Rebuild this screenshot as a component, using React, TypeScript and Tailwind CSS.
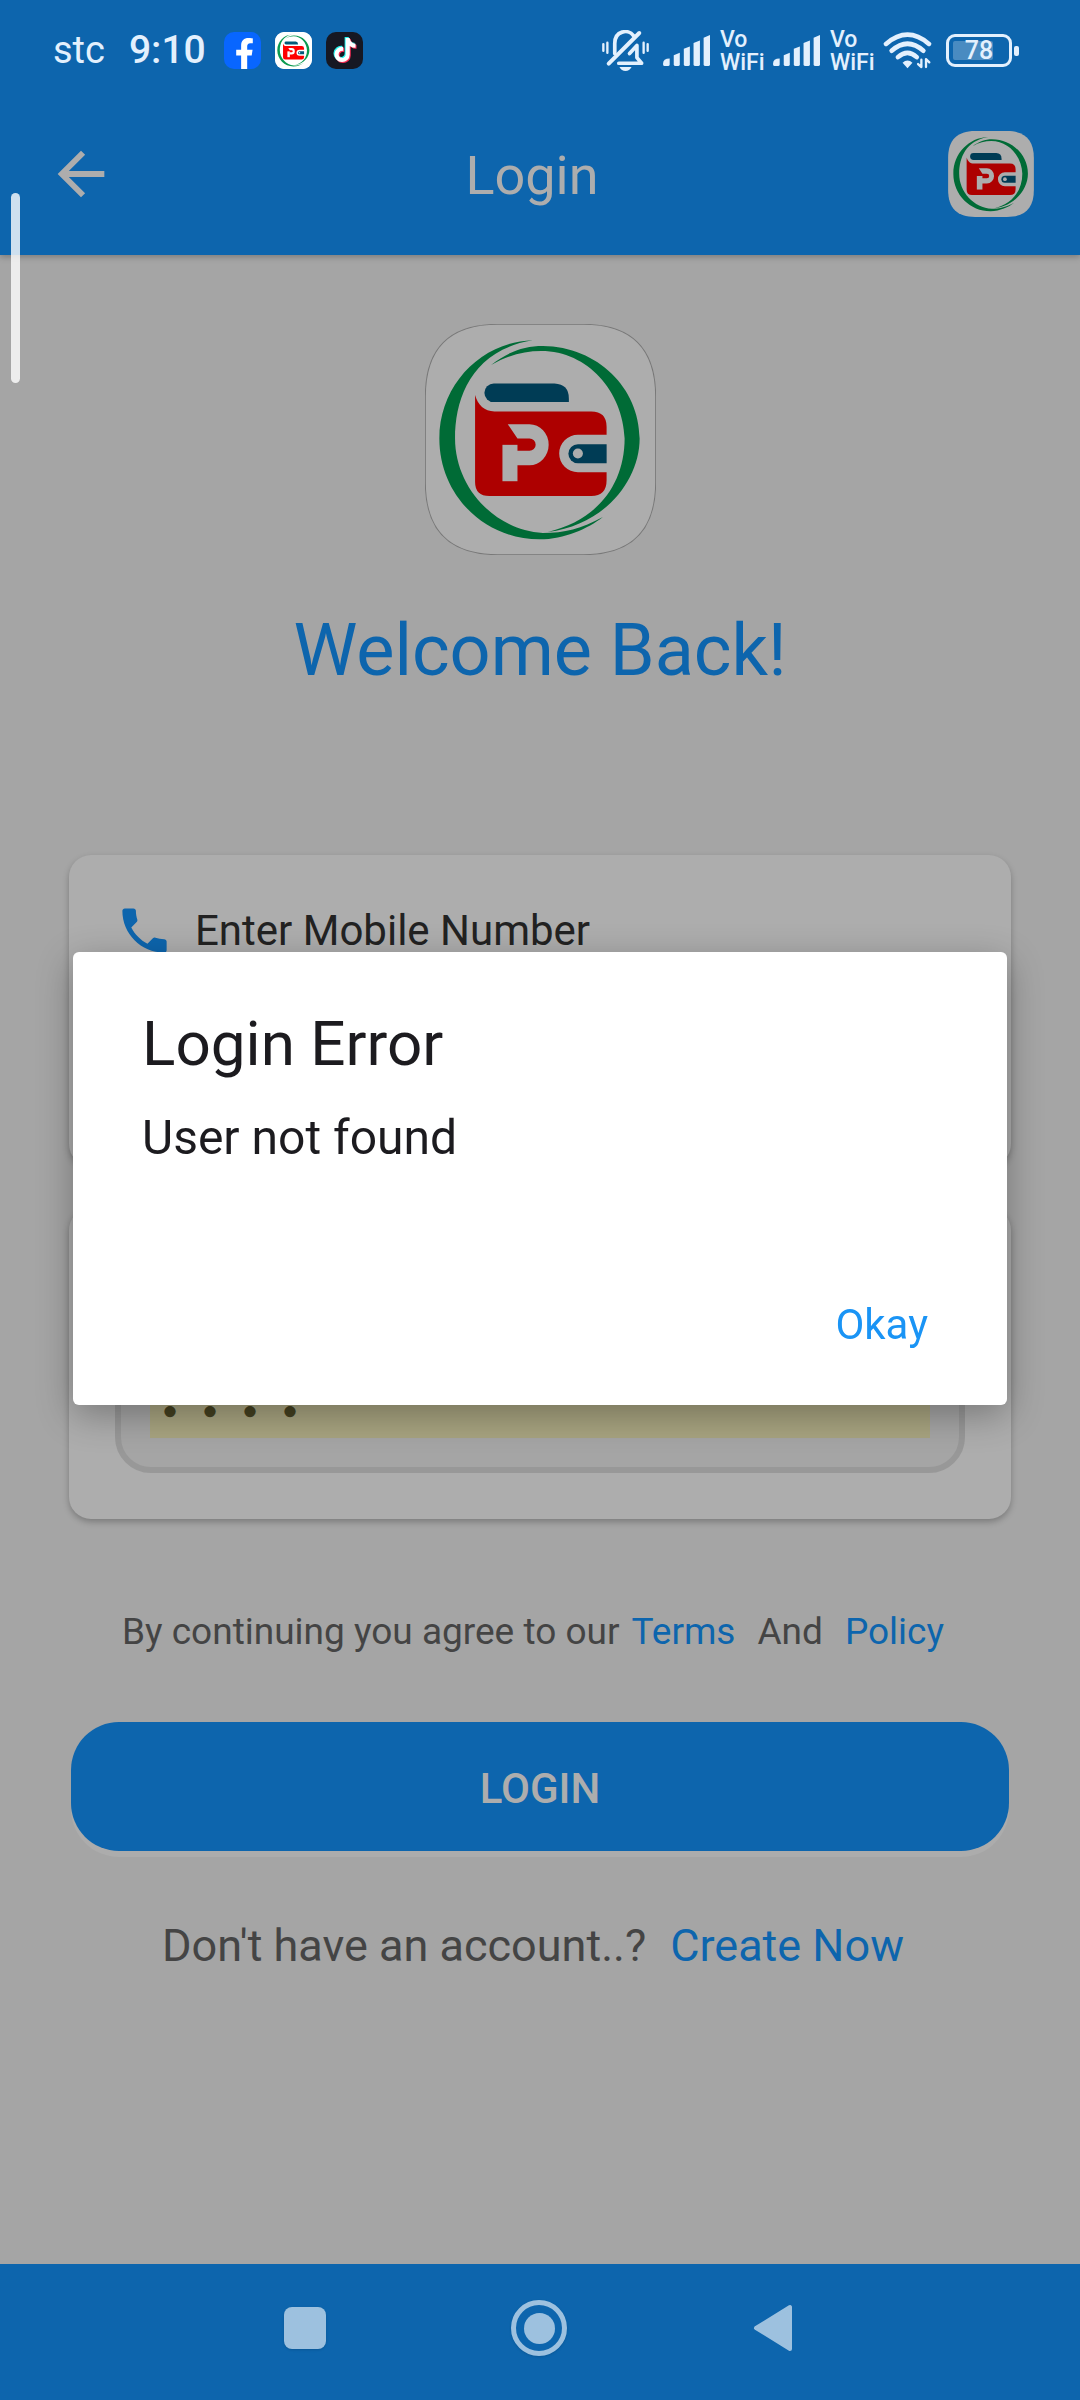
import React, { useState } from "react";
import { FaFacebookF, FaTiktok } from "react-icons/fa";
import { MdArrowBack, MdLock, MdPhone } from "react-icons/md";

interface LogoProps {
  className: string;
  bright?: boolean;
  outlined?: boolean;
}

function Logo({ className, bright = false, outlined = false }: LogoProps) {
  const bg = bright ? "#ffffff" : "#adadad";
  const green = bright ? "#0a9a50" : "#006b36";
  const red = bright ? "#ff0000" : "#ad0000";
  const navy = bright ? "#005a7a" : "#003c55";

  return (
    <svg viewBox="72 72 692 692" className={className} role="img" aria-label="Logo">
      <path
        d="M73 290C73 145 145 73 290 73H546C691 73 763 145 763 290V546C763 691 691 763 546 763H290C145 763 73 691 73 546Z"
        fill={bg}
        stroke={outlined ? "#787878" : "none"}
        strokeWidth="3"
      />
      {/* ring */}
      <path
        d="M395 121C240 125 115 255 115 415C115 585 250 717 415 717C490 717 560 685 605 650C540 685 490 698 425 698C280 690 162 560 162 415C162 290 215 150 395 121Z"
        fill={green}
      />
      <path
        d="M270 195C320 155 370 138 425 138C590 140 715 265 715 415C715 540 610 675 440 695C590 660 670 550 670 415C665 275 560 153 420 153C370 153 320 165 270 195Z"
        fill={green}
      />
      {/* wallet */}
      <path
        d="M222 285C230 315 250 334 280 334H570Q616 334 616 380V404H530A56 56 0 0 0 530 516H616V540Q616 587 570 587H265Q222 587 222 545Z"
        fill={red}
      />
      <path d="M278 250H460Q503 252 503 295V306H278A28 28 0 0 1 278 250Z" fill={navy} />
      <path d="M530 432H616V489H530A28 28 0 0 1 530 432Z" fill={navy} />
      <circle cx="530" cy="460" r="15" fill={bg} />
      <rect x="304" y="434" width="45" height="109" fill={bg} />
      <path
        d="M320 372H385A57 61 0 0 1 385 495H345V452H385A18 18 0 0 0 385 415H349Z"
        fill={bg}
      />
    </svg>
  );
}

function MutedBell() {
  return (
    <svg viewBox="24 22 140 122" className="h-[41px] w-[47px]" fill="none" stroke="currentColor" strokeLinecap="round">
      <path d="M62 92V62C62 24 102 18 117 38" strokeWidth="11" />
      <path d="M44 122L135 31" strokeWidth="12" />
      <path d="M74 121H142L128 104V68L106 92" strokeWidth="11" strokeLinejoin="round" />
      <path d="M28 64V84M160 64V84M40 60V90M148 60V90" strokeWidth="7" />
      <path d="M76 132H112Q106 144 94 144T76 132Z" fill="currentColor" stroke="none" />
    </svg>
  );
}

function SignalBars() {
  return (
    <svg viewBox="208 38 140 92" className="h-[31px] w-[47px]" fill="currentColor">
      <path d="M208 124Q208 108 228 108V126Q228 130 224 130H212Q208 130 208 124Z" />
      <path d="M240 98L258 91V126Q258 130 254 130H244Q240 130 240 126Z" />
      <path d="M270 79L288 72V126Q288 130 284 130H274Q270 130 270 126Z" />
      <path d="M299 62L318 54V126Q318 130 314 130H303Q299 130 299 126Z" />
      <path d="M329 46L348 38V126Q348 130 344 130H333Q329 130 329 126Z" />
    </svg>
  );
}

function WifiIcon() {
  return (
    <svg viewBox="219 28 146 112" className="h-[37px] w-[49px]" fill="none" stroke="currentColor" strokeLinecap="round">
      <path d="M227 64Q292 8 357 64" strokeWidth="14" />
      <path d="M244 85Q292 42 340 85" strokeWidth="14" />
      <path d="M263 104Q292 78 320 104" strokeWidth="14" />
      <path d="M277 121Q292 108 307 121L292 138Z" fill="currentColor" stroke="none" />
      <path d="M334 112V134L324 125M348 134V110L358 120" strokeWidth="7" strokeLinejoin="round" />
    </svg>
  );
}

function VoWifi() {
  return (
    <span className="w-[43px] text-[23px]/[23px] font-medium">
      Vo
      <br />
      WiFi
    </span>
  );
}

function StatusBar() {
  return (
    <div className="flex h-[93px] items-center justify-between pt-2 pr-[61px] pl-[53px] text-[#e3f0fd]">
      <div className="flex items-center">
        <span className="text-[38px]">stc</span>
        <span className="ml-6 text-[39px] font-medium">9:10</span>
        <div className="ml-[18px] flex gap-[14px]">
          <span className="flex size-[37px] items-end justify-center rounded-[10px] bg-[#0866ff] pl-1 text-white">
            <FaFacebookF className="size-[31px]" />
          </span>
          <span className="flex size-[37px] items-center justify-center rounded-[9px] bg-white">
            <Logo bright className="size-[37px]" />
          </span>
          <span className="relative size-[37px] rounded-[10px] bg-[#161823]">
            <FaTiktok className="absolute top-[5px] left-[6px] size-6 text-[#25f4ee]" />
            <FaTiktok className="absolute top-[7px] left-[8px] size-6 text-[#fe2c55]" />
            <FaTiktok className="absolute top-[6px] left-[7px] size-6 text-white" />
          </span>
        </div>
      </div>
      <div className="flex items-center">
        <MutedBell />
        <div className="ml-[14px] flex items-center gap-[10px]">
          <SignalBars />
          <VoWifi />
          <SignalBars />
          <VoWifi />
          <WifiIcon />
        </div>
        <div className="ml-[14px] flex items-center gap-[2px]">
          <span className="relative flex h-[33px] w-[66px] items-center justify-center rounded-[9px] border-3 border-current text-[25px] font-medium">
            <span className="absolute inset-y-1 left-1 w-10 rounded-[2px] bg-white/25" />
            <span className="relative">78</span>
          </span>
          <span className="h-[10px] w-[5px] rounded-[2px] bg-current" />
        </div>
      </div>
    </div>
  );
}

interface FieldProps {
  id: string;
  label: string;
  type: string;
  icon: React.ReactNode;
  value: string;
  onChange: (value: string) => void;
}

function Field({ id, label, type, icon, value, onChange }: FieldProps) {
  return (
    <div className="rounded-[22px] bg-[#adadad] p-[46px] shadow-[0_3px_6px_rgba(0,0,0,0.25)]">
      <label htmlFor={id} className="flex items-center gap-[21px] text-[42px]/[59px] text-[#222]">
        <span className="text-[59px] text-[#0d65ad]">{icon}</span>
        {label}
      </label>
      <div className="mt-[34px] rounded-[36px] border-6 border-[#989898] bg-[#a5a5a5] p-[29px]">
        <input
          id={id}
          type={type}
          value={value}
          onChange={(e) => onChange(e.target.value)}
          className="block h-14 w-full bg-[#a8a480] font-['Noto_Sans_CJK_SC',sans-serif] text-[40px]/[56px] font-black text-[#444020] outline-none"
        />
      </div>
    </div>
  );
}

function NavBar() {
  return (
    <nav className="flex h-[136px] items-center justify-center gap-[178px] bg-[#0d65ad] pr-[2px] pb-2 text-[#9dc1df]">
      <button type="button" aria-label="Recent apps" className="flex size-14 items-center justify-center">
        <span className="size-[42px] rounded-lg bg-current shadow-sm" />
      </button>
      <button
        type="button"
        aria-label="Home"
        className="flex size-14 items-center justify-center rounded-full border-[5px] border-current shadow-sm"
      >
        <span className="size-[31px] rounded-full bg-current" />
      </button>
      <button type="button" aria-label="Back" className="flex size-14 items-center justify-center">
        <svg viewBox="0 0 40 48" className="h-12 w-10" fill="currentColor" stroke="currentColor" strokeWidth="4" strokeLinejoin="round">
          <path d="M3 24L37 3V45Z" />
        </svg>
      </button>
    </nav>
  );
}

export default function App() {
  const [mobile, setMobile] = useState("");
  const [pin, setPin] = useState("1234");
  const [showError, setShowError] = useState(true);

  return (
    <div className="flex min-h-screen flex-col bg-[#a5a5a5] font-['Roboto',sans-serif]">
      <header className="bg-[#0d65ad] shadow-[0_2px_6px_rgba(0,0,0,0.25)]">
        <StatusBar />
        <div className="grid h-[162px] grid-cols-[1fr_auto_1fr] items-center pr-[46px] pl-[46px] text-[#adadad]">
          <button type="button" aria-label="Back">
            <MdArrowBack className="size-[70px]" />
          </button>
          <h1 className="pt-[2px] pr-4 text-[54px]">Login</h1>
          <Logo className="size-[86px] justify-self-end" />
        </div>
      </header>

      <main className="flex flex-1 flex-col px-[69px] pt-[69px]">
        <Logo outlined className="size-[231px] self-center" />
        <h2 className="mt-[56px] text-center text-[72px]/[80px] text-[#0d65ad]">Welcome Back!</h2>

        <form className="mt-[164px] flex flex-col gap-[42px]" id="login" onSubmit={(e) => e.preventDefault()}>
          <Field
            id="mobile"
            label="Enter Mobile Number"
            type="tel"
            icon={<MdPhone />}
            value={mobile}
            onChange={setMobile}
          />
          <Field
            id="pin"
            label="Enter PIN"
            type="password"
            icon={<MdLock />}
            value={pin}
            onChange={setPin}
          />
        </form>

        <p className="mt-[91px] flex items-center justify-center gap-[22px] pr-[14px] text-[37px]/[44px] text-[#444]">
          <span className="flex gap-3">
            By continuing you agree to our
            <a href="#terms" className="text-[#0d65ad]">
              Terms
            </a>
          </span>
          And
          <a href="#policy" className="text-[#0d65ad]">
            Policy
          </a>
        </p>

        <button
          type="submit"
          form="login"
          className="mx-[2px] mt-[68px] h-[129px] rounded-[48px] bg-[#0d65ad] pt-1 text-[42px] font-medium text-[#adadad] shadow-[0_6px_0_#acacac]"
        >
          LOGIN
        </button>

        <p className="mt-[67px] flex justify-center gap-6 pr-[14px] text-[45px]/[56px] text-[#444]">
          Don't have an account..?
          <a href="#create" className="text-[#0d65ad]">
            Create Now
          </a>
        </p>
      </main>

      <NavBar />

      {/* Edge gesture handle */}
      <div className="fixed top-[193px] left-[11px] h-[190px] w-[9px] rounded-full bg-white/80" />

      {showError && (
        <div className="fixed inset-0 flex items-center px-[73px] pt-[93px] pb-[136px]">
          <div
            role="alertdialog"
            aria-labelledby="error-title"
            className="flex w-full flex-col rounded-md bg-white px-[69px] pt-[60px] pb-[46px] text-[#1c1b1f] shadow-[0_10px_36px_rgba(0,0,0,0.3)]"
          >
            <h3 id="error-title" className="text-[62px]/[64px]">
              Login Error
            </h3>
            <p className="mt-[34px] text-[48px]/[56px]">User not found</p>
            <button
              type="button"
              onClick={() => setShowError(false)}
              className="mt-[125px] mr-[10px] self-end text-[42px]/[68px] text-[#1a94f5]"
            >
              Okay
            </button>
          </div>
        </div>
      )}
    </div>
  );
}
